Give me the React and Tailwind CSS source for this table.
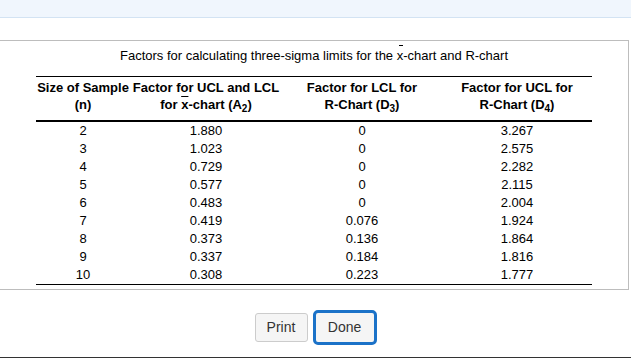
const rows = [
  ["2", "1.880", "0", "3.267"],
  ["3", "1.023", "0", "2.575"],
  ["4", "0.729", "0", "2.282"],
  ["5", "0.577", "0", "2.115"],
  ["6", "0.483", "0", "2.004"],
  ["7", "0.419", "0.076", "1.924"],
  ["8", "0.373", "0.136", "1.864"],
  ["9", "0.337", "0.184", "1.816"],
  ["10", "0.308", "0.223", "1.777"],
];

// x with a bar over it (sample mean)
const XBar = () => <span className="overline">x</span>;

const Sub = ({ children }) => (
  <span className="relative top-[3px] text-[10px]">{children}</span>
);

const Header = ({ children }) => (
  <th className="border-t border-b-2 border-black pt-[2px] pb-[6px] text-center align-top text-[13px] font-bold leading-[17px]">
    {children}
  </th>
);

export default function App() {
  return (
    <div className="h-[358px] border-b border-[#333] bg-white font-['Liberation_Sans',Arial,sans-serif] text-black">
      <div className="h-[18px] border-b border-[#d3e3f3] bg-[#f0f6fd]" />

      <div className="mt-[22px] h-[250px] w-[629px] border-y border-r border-[#bdbdbd] pt-[7px]">
        <p className="text-center text-[13px] leading-[16px]">
          Factors for calculating three-sigma limits for the{" "}
          <span className="relative inline-block">
            x
            <span className="absolute left-[2px] top-[-3px] h-px w-[4px] bg-black" />
          </span>
          -chart and R-chart
        </p>

        <table className="mt-[12px] ml-[36px] w-[556px] table-fixed border-collapse">
          <colgroup>
            <col className="w-[94px]" />
            <col className="w-[152px]" />
            <col className="w-[160px]" />
            <col className="w-[150px]" />
          </colgroup>
          <thead>
            <tr>
              <Header>
                Size of Sample
                <br />
                (n)
              </Header>
              <Header>
                Factor for UCL and LCL
                <br />
                for <XBar />-chart (A<Sub>2</Sub>)
              </Header>
              <Header>
                Factor for LCL for
                <br />
                R-Chart (D<Sub>3</Sub>)
              </Header>
              <Header>
                Factor for UCL for
                <br />
                R-Chart (D<Sub>4</Sub>)
              </Header>
            </tr>
          </thead>
          <tbody className="border-b border-black">
            {rows.map((r) => (
              <tr key={r[0]} className="h-[18px] text-[13px] leading-[18px]">
                {r.map((v, i) => (
                  <td key={i} className="p-0 text-center">
                    {v}
                  </td>
                ))}
              </tr>
            ))}
          </tbody>
        </table>
      </div>

      <div className="mt-[20px] flex items-center justify-center gap-[5px] text-[14px] text-[#333]">
        <button className="h-[29px] w-[53px] rounded-[3px] border border-[#ccc] bg-[#f5f5f5]">
          Print
        </button>
        <button className="h-[35px] w-[64px] rounded-[5px] border-[3px] border-[#1b72c8] bg-[#f5f5f5]">
          Done
        </button>
      </div>
    </div>
  );
}
